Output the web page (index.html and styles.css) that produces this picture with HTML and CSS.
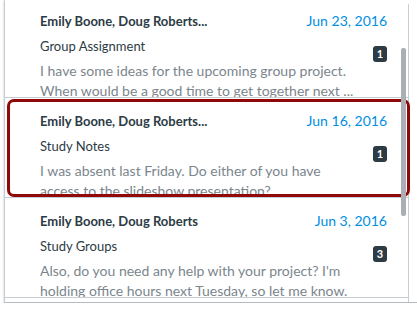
FILE: index.html
```html
<!DOCTYPE html>
<html lang="en">
<head>
<meta charset="UTF-8" />
<meta name="viewport" content="width=device-width, initial-scale=1" />
<title>Inbox</title>
<link rel="stylesheet" href="styles.css">
</head>
<body>

<div class="inbox">
  <div class="list">
    <div class="msg">
      <div class="msg-head">
        <span class="msg-from">Emily Boone, Doug Roberts...</span>
        <span class="msg-date">Jun 23, 2016</span>
      </div>
      <div class="msg-subject">Group Assignment</div>
      <span class="msg-badge">1</span>
      <div class="msg-preview">I have some ideas for the upcoming group project. When would be a good time to get together next ...</div>
    </div>

    <div class="msg focused">
      <div class="msg-head">
        <span class="msg-from">Emily Boone, Doug Roberts...</span>
        <span class="msg-date">Jun 16, 2016</span>
      </div>
      <div class="msg-subject">Study Notes</div>
      <span class="msg-badge">1</span>
      <div class="msg-preview">I was absent last Friday. Do either of you have access to the slideshow presentation?</div>
    </div>

    <div class="msg">
      <div class="msg-head">
        <span class="msg-from">Emily Boone, Doug Roberts</span>
        <span class="msg-date">Jun 3, 2016</span>
      </div>
      <div class="msg-subject">Study Groups</div>
      <span class="msg-badge">3</span>
      <div class="msg-preview">Also, do you need any help with your project? I'm holding office hours next Tuesday, so let me know.</div>
    </div>
  </div>
  <div class="track"></div>
  <div class="thumb"></div>
</div>

</body>
</html>
```

FILE: styles.css
```css
html, body {
  margin: 0;
  padding: 0;
  overflow: hidden;
  background: #fff;
}
body {
  font-family: Lato, "Open Sans", sans-serif;
  color: #2d3b45;
}
.inbox {
  position: relative;
  display: flex;
  width: 412px;
  height: 302px;
  margin-left: 4px;
  border-left: 1px solid #c7cdd1;
  border-bottom: 1px solid #b5bbbf;
  box-shadow: 0 1px 2px rgba(0, 0, 0, 0.25);
  overflow: hidden;
}
.list {
  width: 403px;
  margin-top: -2px;
}
.track {
  flex: 1;
  border-left: 1px solid #c7cdd1;
  margin-top: 4px;
}
.thumb {
  position: absolute;
  left: 396px;
  top: 48px;
  width: 5px;
  height: 168px;
  border-radius: 2px;
  background: #a9afb4;
}
.msg {
  position: relative;
  display: grid;
  grid-template-columns: 1fr auto;
  column-gap: 12px;
  align-content: start;
  height: 100px;
  padding: 14px 21px 0 35px;
  box-sizing: border-box;
  border-bottom: 1px solid #c7cdd1;
}
.msg.focused::after {
  content: "";
  position: absolute;
  top: 1px;
  left: 2px;
  right: -2px;
  bottom: 0;
  border: 3px solid #900808;
  border-radius: 7px;
}
.msg-head {
  grid-column: 1 / -1;
  display: flex;
  justify-content: space-between;
  line-height: 18px;
}
.msg-from {
  font-size: 13px;
  font-weight: bold;
}
.msg-date {
  font-size: 14px;
  color: #008ee2;
}
.msg-subject {
  grid-column: 1;
  margin-top: 7px;
  font-size: 13px;
  line-height: 18px;
}
.msg-badge {
  grid-column: 2;
  grid-row: 2 / span 2;
  justify-self: end;
  align-self: start;
  margin-top: 16px;
  width: 14px;
  height: 16px;
  border-radius: 3px;
  background: #2d3b45;
  color: #fff;
  font-size: 11px;
  font-weight: bold;
  line-height: 16px;
  text-align: center;
}
.msg-preview {
  grid-column: 1;
  height: 36px;
  margin-top: 6px;
  overflow: hidden;
  font-size: 14px;
  line-height: 20px;
  color: #7b868d;
}
```
